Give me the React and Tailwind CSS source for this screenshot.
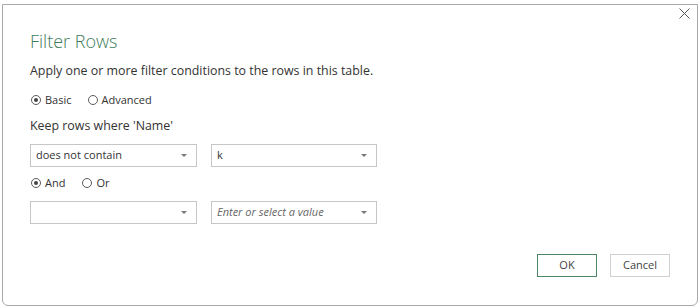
import React from "react";

const FONT = { fontFamily: '"Open Sans", "Noto Sans", sans-serif' };

const Radio = ({ checked, label }) => (
  <label className="flex items-center gap-[4px] text-[11px] text-[#333]">
    <span className="w-[10px] h-[10px] rounded-full border border-[#5a5a5a] flex items-center justify-center">
      {checked && <span className="w-[4px] h-[4px] rounded-full bg-[#444]" />}
    </span>
    {label}
  </label>
);

const Caret = () => (
  <svg width="6" height="3" viewBox="0 0 6 3" className="flex-shrink-0">
    <path d="M0 0 L6 0 L3 3 Z" fill="#777" />
  </svg>
);

const Select = ({ value, placeholder, width }) => (
  <div className={`h-[23px] border border-[#c6c6c6] bg-white flex items-center justify-between pl-[5px] pr-[9px] ${width}`}>
    {value ? (
      <span className="text-[11px] text-[#333]">{value}</span>
    ) : (
      <span className="text-[11px] italic text-[#666]">{placeholder}</span>
    )}
    <Caret />
  </div>
);

export default function App() {
  return (
    <div className="w-[700px] h-[307px] bg-white overflow-hidden pt-[4px] pl-[2px]" style={FONT}>
      <div className="w-[696px] h-[302px] border border-[#a8a8a8] rounded-b-[6px] bg-white flex flex-col relative">
        {/* close */}
        <button className="absolute right-[7px] top-[2px] w-[12px] h-[12px] flex items-center justify-center">
          <svg width="11" height="11" viewBox="0 0 11 11">
            <path d="M0.5 0.5 L10.5 10.5 M10.5 0.5 L0.5 10.5" stroke="#555" strokeWidth="1" />
          </svg>
        </button>

        <div className="pl-[27px] pt-[24px] flex flex-col">
          <h1 className="text-[18px] font-light text-[#3e7d5a] leading-[24px]">Filter Rows</h1>
          <p className="mt-[9px] text-[12.4px] text-[#333] leading-[18px]">
            Apply one or more filter conditions to the rows in this table.
          </p>
          <div className="mt-[11px] flex items-center gap-[16px] h-[18px] pl-[1px]">
            <Radio checked label="Basic" />
            <Radio label="Advanced" />
          </div>
          <p className="mt-[8px] text-[12.4px] text-[#333] leading-[18px]">Keep rows where 'Name'</p>
          <div className="mt-[9px] flex items-center gap-[14px]">
            <Select value="does not contain" width="w-[167px]" />
            <Select value="k" width="w-[166px]" />
          </div>
          <div className="mt-[7px] flex items-center gap-[17px] h-[18px] pl-[1px]">
            <Radio checked label="And" />
            <Radio label="Or" />
          </div>
          <div className="mt-[9px] flex items-center gap-[14px]">
            <Select value="" placeholder="" width="w-[167px]" />
            <Select placeholder="Enter or select a value" width="w-[166px]" />
          </div>
        </div>

        <div className="mt-auto mb-[28px] mr-[27px] flex justify-end gap-[13px]">
          <button className="w-[60px] h-[23px] border border-[#4a8566] text-[11px] text-[#444] bg-white">OK</button>
          <button className="w-[60px] h-[23px] border border-[#d0d0d0] text-[11px] text-[#444] bg-white">Cancel</button>
        </div>
      </div>
    </div>
  );
}
